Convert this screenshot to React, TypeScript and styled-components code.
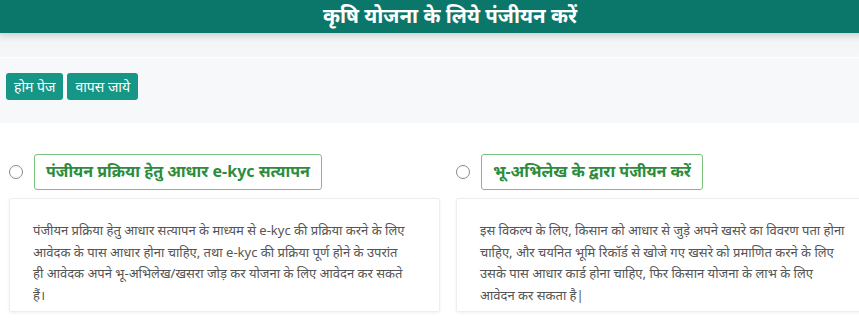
import React from "react";
import styled, { createGlobalStyle } from "styled-components";

const Global = createGlobalStyle`
  html, body { margin: 0; padding: 0; background: #ffffff; overflow: hidden; }
  body { font-family: "Noto Sans", "Liberation Sans", sans-serif; }
`;

const Page = styled.div`
  width: 900px;
  height: 325px;
  overflow: hidden;
  background: #ffffff;
`;

const Header = styled.header`
  height: 33px;
  background: #0b776b;
  display: flex;
  align-items: center;
  justify-content: center;
  color: #ffffff;
  font-size: 20.5px;
  font-weight: 700;
  line-height: 1;
  padding-bottom: 3px;
  box-sizing: border-box;
  box-shadow: 0 2px 6px rgba(0, 0, 0, 0.12);
  position: relative;
  z-index: 1;
`;

const Strip = styled.div`
  height: 24px;
  background: linear-gradient(#e8eced, #f3f5f6 40%, #f6f7f9);
  border-bottom: 1px solid #ffffff;
`;

const Toolbar = styled.div`
  height: 65px;
  background: #f7f8fa;
  display: flex;
  align-items: flex-start;
  gap: 4px;
  padding: 15px 6px 0;
  box-sizing: border-box;
`;

const Button = styled.button`
  height: 27px;
  padding: 0 8px;
  border: none;
  border-radius: 3px;
  background: #169686;
  color: #ffffff;
  font-family: "Noto Sans", "Liberation Sans", sans-serif;
  font-size: 14px;
  line-height: 27px;
  cursor: pointer;
`;

const Columns = styled.div`
  display: grid;
  grid-template-columns: 431px 431px;
  column-gap: 16px;
  padding: 31px 0 0 9px;
`;

const Option = styled.div`
  display: flex;
  flex-direction: column;
  gap: 8px;
`;

const OptionHead = styled.label`
  display: flex;
  align-items: center;
  gap: 11px;
`;

const Radio = styled.span`
  width: 12px;
  height: 12px;
  border-radius: 50%;
  border: 1px solid #8a8a8a;
  background: #fff;
  flex: none;
`;

const TitleBox = styled.div`
  height: 36px;
  box-sizing: border-box;
  border: 1px solid #79c07d;
  border-radius: 3px;
  display: flex;
  align-items: center;
  padding: 0 11px 2px;
  color: #2c8c3c;
  font-size: 16px;
  font-weight: 700;
`;

const Desc = styled.div`
  height: 114px;
  box-sizing: border-box;
  background: #fff;
  border: 1px solid #eeeeee;
  border-radius: 2px;
  box-shadow: 0 1px 3px rgba(0, 0, 0, 0.06);
  padding: 21px 12px 0 23px;
  color: #555555;
  font-size: 13px;
  line-height: 21.5px;
`;

const Line = styled.span`
  display: block;
  white-space: nowrap;
`;

const options = [
  {
    title: "पंजीयन प्रक्रिया हेतु आधार e-kyc सत्यापन",
    lines: [
      "पंजीयन प्रक्रिया हेतु आधार सत्यापन के माध्यम से e-kyc की प्रक्रिया करने के लिए",
      "आवेदक के पास आधार होना चाहिए, तथा e-kyc की प्रक्रिया पूर्ण होने के उपरांत",
      "ही आवेदक अपने भू-अभिलेख/खसरा जोड़ कर योजना के लिए आवेदन कर सकते",
      "हैं।",
    ],
  },
  {
    title: "भू-अभिलेख के द्वारा पंजीयन करें",
    lines: [
      "इस विकल्प के लिए, किसान को आधार से जुड़े अपने खसरे का विवरण पता होना",
      "चाहिए, और चयनित भूमि रिकॉर्ड से खोजे गए खसरे को प्रमाणित करने के लिए",
      "उसके पास आधार कार्ड होना चाहिए, फिर किसान योजना के लाभ के लिए",
      "आवेदन कर सकता है|",
    ],
  },
];

export default function App() {
  return (
    <Page>
      <Global />
      <Header>कृषि योजना के लिये पंजीयन करें</Header>
      <Strip />
      <Toolbar>
        <Button>होम पेज</Button>
        <Button>वापस जाये</Button>
      </Toolbar>
      <Columns>
        {options.map((o) => (
          <Option key={o.title}>
            <OptionHead>
              <Radio />
              <TitleBox>{o.title}</TitleBox>
            </OptionHead>
            <Desc>
              {o.lines.map((l) => (
                <Line key={l}>{l}</Line>
              ))}
            </Desc>
          </Option>
        ))}
      </Columns>
    </Page>
  );
}
